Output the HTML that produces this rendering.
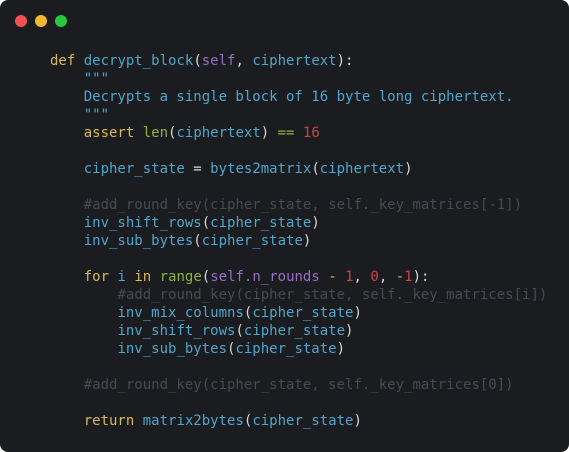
<!DOCTYPE html>
<html><head><style>
html,body{margin:0;padding:0;background:#fff;width:569px;height:452px;overflow:hidden}
.win{position:absolute;left:0;top:0;width:569px;height:452px;background:#1b1c1f;border-radius:8px}
.dot{position:absolute;top:15px;width:12px;height:12px;border-radius:50%}
pre{position:absolute;left:50px;top:52px;margin:0;font-family:"DejaVu Sans Mono","Liberation Mono",monospace;font-size:14px;line-height:18px;color:#d8d8d8}
.k{color:#d6b85e}.f{color:#4fa6cc}.s{color:#9a6cc4}.g{color:#8db33e}.n{color:#cc4444}.c{color:#474a50}
</style></head><body><div class="win">
<div class="dot" style="left:15px;background:#f0524f"></div>
<div class="dot" style="left:35px;background:#f4b82e"></div>
<div class="dot" style="left:55px;background:#27c840"></div>
<pre><span class="k">def</span> <span class="f">decrypt_block</span>(<span class="s">self</span>, <span class="f">ciphertext</span>):
    <span class="f">"""</span>
    <span class="f">Decrypts a single block of 16 byte long ciphertext.</span>
    <span class="f">"""</span>
    <span class="k">assert</span> <span class="g">len</span>(<span class="f">ciphertext</span>) <span class="g">==</span> <span class="n">16</span>

    <span class="f">cipher_state</span> = <span class="f">bytes2matrix</span>(<span class="f">ciphertext</span>)

    <span class="c">#add_round_key(cipher_state, self._key_matrices[-1])</span>
    <span class="f">inv_shift_rows</span>(<span class="f">cipher_state</span>)
    <span class="f">inv_sub_bytes</span>(<span class="f">cipher_state</span>)

    <span class="k">for</span> <span class="f">i</span> <span class="k">in</span> <span class="g">range</span>(<span class="s">self.n_rounds</span> <span class="k">-</span> <span class="n">1</span>, <span class="n">0</span>, <span class="k">-</span><span class="n">1</span>):
        <span class="c">#add_round_key(cipher_state, self._key_matrices[i])</span>
        <span class="f">inv_mix_columns</span>(<span class="f">cipher_state</span>)
        <span class="f">inv_shift_rows</span>(<span class="f">cipher_state</span>)
        <span class="f">inv_sub_bytes</span>(<span class="f">cipher_state</span>)

    <span class="c">#add_round_key(cipher_state, self._key_matrices[0])</span>

    <span class="k">return</span> <span class="f">matrix2bytes</span>(<span class="f">cipher_state</span>)</pre>
</div></body></html>
